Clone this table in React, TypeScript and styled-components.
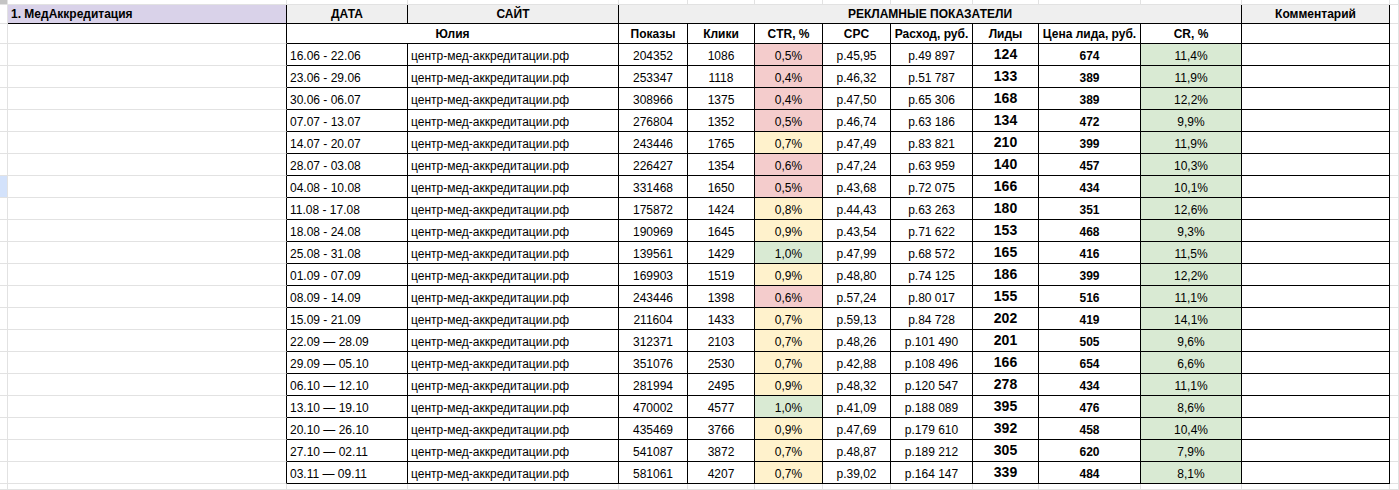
import React from 'react';
import styled, { createGlobalStyle } from 'styled-components';

type Tone = 'red' | 'yellow' | 'green';

const GRID = '#e2e2e2';
const LINE = '#000000';

const TONES: Record<Tone, string> = {
  red: '#f4cccc',
  yellow: '#fff2cc',
  green: '#d9ead3',
};

const rows: Array<{
  date: string;
  shows: string;
  clicks: string;
  ctr: string;
  tone: Tone;
  cpc: string;
  spend: string;
  leads: string;
  price: string;
  cr: string;
}> = [
  { date: '16.06 - 22.06', shows: '204352', clicks: '1086', ctr: '0,5%', tone: 'red', cpc: 'р.45,95', spend: 'р.49 897', leads: '124', price: '674', cr: '11,4%' },
  { date: '23.06 - 29.06', shows: '253347', clicks: '1118', ctr: '0,4%', tone: 'red', cpc: 'р.46,32', spend: 'р.51 787', leads: '133', price: '389', cr: '11,9%' },
  { date: '30.06 - 06.07', shows: '308966', clicks: '1375', ctr: '0,4%', tone: 'red', cpc: 'р.47,50', spend: 'р.65 306', leads: '168', price: '389', cr: '12,2%' },
  { date: '07.07 - 13.07', shows: '276804', clicks: '1352', ctr: '0,5%', tone: 'red', cpc: 'р.46,74', spend: 'р.63 186', leads: '134', price: '472', cr: '9,9%' },
  { date: '14.07 - 20.07', shows: '243446', clicks: '1765', ctr: '0,7%', tone: 'yellow', cpc: 'р.47,49', spend: 'р.83 821', leads: '210', price: '399', cr: '11,9%' },
  { date: '28.07 - 03.08', shows: '226427', clicks: '1354', ctr: '0,6%', tone: 'red', cpc: 'р.47,24', spend: 'р.63 959', leads: '140', price: '457', cr: '10,3%' },
  { date: '04.08 - 10.08', shows: '331468', clicks: '1650', ctr: '0,5%', tone: 'red', cpc: 'р.43,68', spend: 'р.72 075', leads: '166', price: '434', cr: '10,1%' },
  { date: '11.08 - 17.08', shows: '175872', clicks: '1424', ctr: '0,8%', tone: 'yellow', cpc: 'р.44,43', spend: 'р.63 263', leads: '180', price: '351', cr: '12,6%' },
  { date: '18.08 - 24.08', shows: '190969', clicks: '1645', ctr: '0,9%', tone: 'yellow', cpc: 'р.43,54', spend: 'р.71 622', leads: '153', price: '468', cr: '9,3%' },
  { date: '25.08 - 31.08', shows: '139561', clicks: '1429', ctr: '1,0%', tone: 'green', cpc: 'р.47,99', spend: 'р.68 572', leads: '165', price: '416', cr: '11,5%' },
  { date: '01.09 - 07.09', shows: '169903', clicks: '1519', ctr: '0,9%', tone: 'yellow', cpc: 'р.48,80', spend: 'р.74 125', leads: '186', price: '399', cr: '12,2%' },
  { date: '08.09 - 14.09', shows: '243446', clicks: '1398', ctr: '0,6%', tone: 'red', cpc: 'р.57,24', spend: 'р.80 017', leads: '155', price: '516', cr: '11,1%' },
  { date: '15.09 - 21.09', shows: '211604', clicks: '1433', ctr: '0,7%', tone: 'yellow', cpc: 'р.59,13', spend: 'р.84 728', leads: '202', price: '419', cr: '14,1%' },
  { date: '22.09 — 28.09', shows: '312371', clicks: '2103', ctr: '0,7%', tone: 'yellow', cpc: 'р.48,26', spend: 'р.101 490', leads: '201', price: '505', cr: '9,6%' },
  { date: '29.09 — 05.10', shows: '351076', clicks: '2530', ctr: '0,7%', tone: 'yellow', cpc: 'р.42,88', spend: 'р.108 496', leads: '166', price: '654', cr: '6,6%' },
  { date: '06.10 — 12.10', shows: '281994', clicks: '2495', ctr: '0,9%', tone: 'yellow', cpc: 'р.48,32', spend: 'р.120 547', leads: '278', price: '434', cr: '11,1%' },
  { date: '13.10 — 19.10', shows: '470002', clicks: '4577', ctr: '1,0%', tone: 'green', cpc: 'р.41,09', spend: 'р.188 089', leads: '395', price: '476', cr: '8,6%' },
  { date: '20.10 — 26.10', shows: '435469', clicks: '3766', ctr: '0,9%', tone: 'yellow', cpc: 'р.47,69', spend: 'р.179 610', leads: '392', price: '458', cr: '10,4%' },
  { date: '27.10 — 02.11', shows: '541087', clicks: '3872', ctr: '0,7%', tone: 'yellow', cpc: 'р.48,87', spend: 'р.189 212', leads: '305', price: '620', cr: '7,9%' },
  { date: '03.11 — 09.11', shows: '581061', clicks: '4207', ctr: '0,7%', tone: 'yellow', cpc: 'р.39,02', spend: 'р.164 147', leads: '339', price: '484', cr: '8,1%' },
];

const metricHeads = ['Показы', 'Клики', 'CTR, %', 'CPC', 'Расход, руб.', 'Лиды', 'Цена лида, руб.', 'CR, %'];

const SITE = 'центр-мед-аккредитации.рф';
const SELECTED_ROW = 6;

const App: React.FC = () => {
  return (
    <>
      <GlobalStyle />
      <Sheet>
        {/* cut-off row above the table */}
        <Corner />
        {Array.from({ length: 13 }).map((_, i) => (
          <Cell key={`top-${i}`} />
        ))}

        {/* row 1: section title + group headers */}
        <Gutter />
        <TitleCell $r={LINE} $b={LINE}>1. МедАккредитация</TitleCell>
        <GroupHead>ДАТА</GroupHead>
        <GroupHead>САЙТ</GroupHead>
        <GroupHead $span={8}>РЕКЛАМНЫЕ ПОКАЗАТЕЛИ</GroupHead>
        <GroupHead>Комментарий</GroupHead>
        <Cell />

        {/* row 2: column headers */}
        <Gutter />
        <Cell $r={LINE} />
        <ColHead $span={2}>Юлия</ColHead>
        {metricHeads.map((h) => (
          <ColHead key={h}>{h}</ColHead>
        ))}
        <ColHead />
        <Cell />

        {rows.map((r, i) => (
          <React.Fragment key={r.date}>
            <Gutter $active={i === SELECTED_ROW} />
            <Cell $r={LINE} />
            <DataCell $align="left">{r.date}</DataCell>
            <DataCell $align="left">{SITE}</DataCell>
            <DataCell>{r.shows}</DataCell>
            <DataCell>{r.clicks}</DataCell>
            <DataCell $bg={TONES[r.tone]}>{r.ctr}</DataCell>
            <DataCell>{r.cpc}</DataCell>
            <DataCell>{r.spend}</DataCell>
            <LeadsCell>{r.leads}</LeadsCell>
            <PriceCell>{r.price}</PriceCell>
            <DataCell $bg={TONES.green}>{r.cr}</DataCell>
            <DataCell />
            <Cell />
          </React.Fragment>
        ))}

        {/* empty row below */}
        {Array.from({ length: 14 }).map((_, i) => (
          <Cell key={`bottom-${i}`} />
        ))}
      </Sheet>
    </>
  );
};

// Styled Components
const GlobalStyle = createGlobalStyle`
  * {
    box-sizing: border-box;
  }

  html, body {
    margin: 0;
    padding: 0;
    background: #ffffff;
    overflow: hidden;
  }
`;

const Sheet = styled.div`
  display: grid;
  grid-template-columns: 8px 279px 121px 211px 69px 67px 68px 68px 82px 66px 102px 101px 148px 1fr;
  grid-template-rows: 5px 19px 20px repeat(20, 22px) 1fr;
  height: 490px;
  width: 1399px;
  overflow: hidden;
  font-family: 'Liberation Sans', Arial, sans-serif;
  font-size: 12px;
  color: #000000;
`;

const Cell = styled.div<{
  $bg?: string;
  $r?: string;
  $b?: string;
  $span?: number;
  $align?: 'left' | 'center';
}>`
  grid-column: span ${({ $span }) => $span ?? 1};
  min-width: 0;
  display: flex;
  align-items: flex-end;
  justify-content: ${({ $align }) => ($align === 'left' ? 'flex-start' : 'center')};
  padding: 0 3px 1px;
  background: ${({ $bg }) => $bg ?? '#ffffff'};
  border-right: 1px solid ${({ $r }) => $r ?? GRID};
  border-bottom: 1px solid ${({ $b }) => $b ?? GRID};
  white-space: nowrap;
  overflow: hidden;
  line-height: 15px;
`;

const Corner = styled(Cell)`
  background: #c4c4c4;
`;

const Gutter = styled(Cell)<{ $active?: boolean }>`
  padding: 0;
  background: ${({ $active }) => ($active ? '#d3e2fb' : '#ffffff')};
`;

const TitleCell = styled(Cell)`
  justify-content: flex-start;
  background: #d9d2e9;
  font-weight: 700;
`;

const GroupHead = styled(Cell).attrs({ $r: LINE, $b: LINE })`
  background: #efefef;
  font-weight: 700;
`;

const ColHead = styled(Cell).attrs({ $r: LINE, $b: LINE })`
  font-weight: 700;
`;

const DataCell = styled(Cell).attrs({ $r: LINE, $b: LINE })`
  padding-bottom: 1px;
`;

const LeadsCell = styled(DataCell)`
  font-size: 14px;
  font-weight: 700;
  line-height: 17px;
  padding-bottom: 2px;
`;

const PriceCell = styled(DataCell)`
  font-weight: 700;
`;

export default App;
